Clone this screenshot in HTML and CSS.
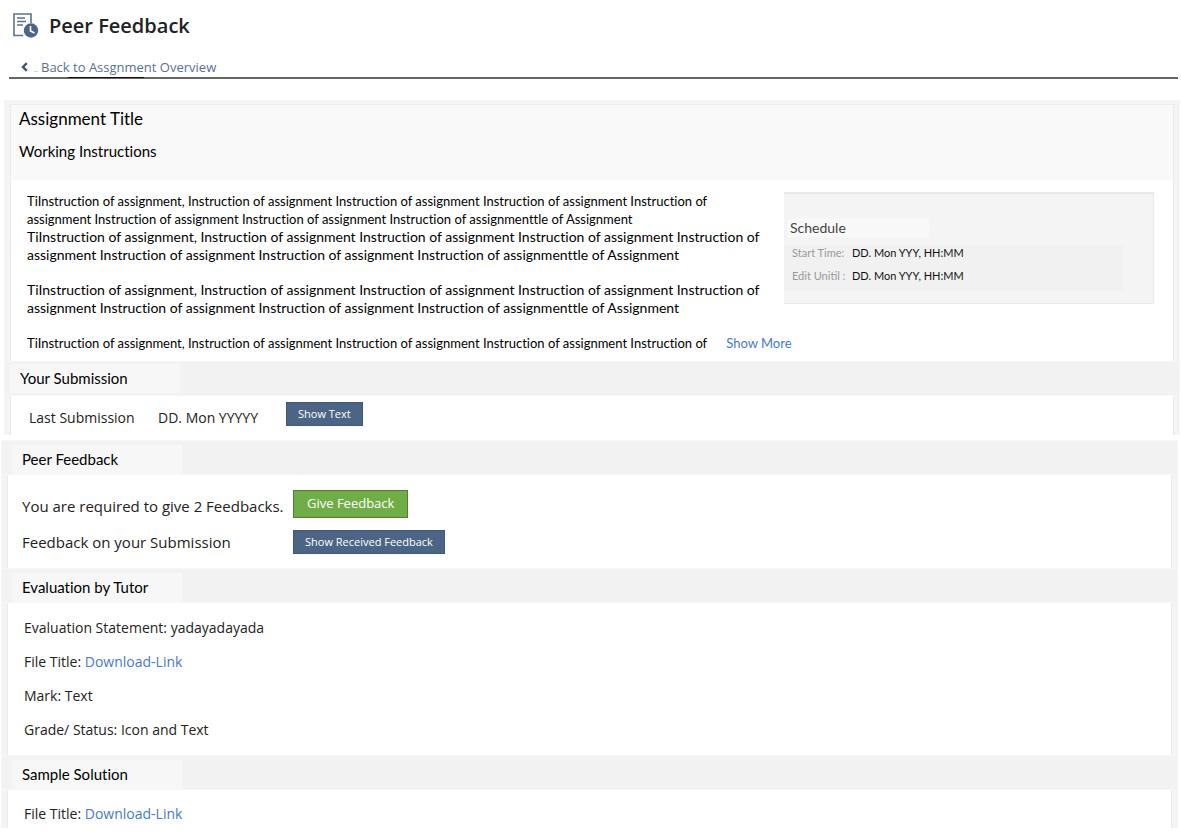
FILE: index.html
```
<!DOCTYPE html>
<html lang="en">
<head>
    <meta charset="UTF-8">
    <meta name="viewport" content="width=device-width, initial-scale=1.0">
    <title>Peer Feedback</title>
    <link rel="stylesheet" href="styles.css">
</head>
<body>
    <header class="page-header">
        <svg class="page-icon" width="28" height="28" viewBox="0 0 28 28" aria-hidden="true">
            <path d="M11 23.500H2V2h17v9" fill="none" stroke="#5b7192" stroke-width="1.600"/>
            <path d="M5 6h8M5 9.500h9M5 13h6" stroke="#5b7192" stroke-width="1.600"/>
            <circle cx="19" cy="18.500" r="7.200" fill="#4c6586"/>
            <path d="M18.500 14v5l4 2" fill="none" stroke="#fff" stroke-width="1.600"/>
        </svg>
        <h1>Peer Feedback</h1>
    </header>
    <nav class="back-bar">
        <svg width="7" height="10" viewBox="0 0 7 10" aria-hidden="true">
            <path d="M5.800 1.200L2 5l3.800 3.800" fill="none" stroke="#3f5877" stroke-width="2.400"/>
        </svg>
        <span class="back-mark">_</span>
        <a href="#">Back to Assgnment Overview</a>
    </nav>

    <main>
        <div class="panel panel-assignment">
            <div class="intro">
                <h2>Assignment Title</h2>
                <h3>Working Instructions</h3>
            </div>
            <div class="instructions">
                <div class="instruction-text">
                    <p class="small">TiInstruction of assignment, Instruction of assignment Instruction of assignment Instruction of assignment Instruction of<br>assignment Instruction of assignment Instruction of assignment Instruction of assignmenttle of Assignment</p>
                    <p>TiInstruction of assignment, Instruction of assignment Instruction of assignment Instruction of assignment Instruction of<br>assignment Instruction of assignment Instruction of assignment Instruction of assignmenttle of Assignment</p>
                    <p class="spaced">TiInstruction of assignment, Instruction of assignment Instruction of assignment Instruction of assignment Instruction of<br>assignment Instruction of assignment Instruction of assignment Instruction of assignmenttle of Assignment</p>
                    <p class="small spaced">TiInstruction of assignment, Instruction of assignment Instruction of assignment Instruction of assignment Instruction of <a class="more" href="#">Show More</a></p>
                </div>
                <aside class="schedule">
                    <h4>Schedule</h4>
                    <dl>
                        <div><dt>Start Time:</dt><dd>DD. Mon YYY, HH:MM</dd></div>
                        <div><dt>Edit Unitil :</dt><dd>DD. Mon YYY, HH:MM</dd></div>
                    </dl>
                </aside>
            </div>
            <h3 class="section-title"><span>Your Submission</span></h3>
            <div class="submission">
                <span class="submission-label">Last Submission</span>
                <span class="submission-date">DD. Mon YYYYY</span>
                <button type="button" class="btn">Show Text</button>
            </div>
        </div>

        <div class="panel panel-feedback">
            <h3 class="section-title"><span>Peer Feedback</span></h3>
            <div class="feedback">
                <span>You are required to give 2 Feedbacks.</span>
                <button type="button" class="btn btn-give">Give Feedback</button>
                <span>Feedback on your Submission</span>
                <button type="button" class="btn">Show Received Feedback</button>
            </div>
            <h3 class="section-title"><span>Evaluation by Tutor</span></h3>
            <div class="details">
                <p>Evaluation Statement: yadayadayada</p>
                <p>File Title: <a href="#">Download-Link</a></p>
                <p>Mark: Text</p>
                <p>Grade/ Status: Icon and Text</p>
            </div>
            <h3 class="section-title"><span>Sample Solution</span></h3>
            <div class="details details-last">
                <p>File Title: <a href="#">Download-Link</a></p>
            </div>
        </div>
    </main>
</body>
</html>
```
FILE: styles.css
```
* {
    box-sizing: border-box;
}
body {
    font-family: "Open Sans", sans-serif;
    font-size: 14px;
    margin: 0;
    background: #fff;
    color: #222;
}
h1, h2, h3, h4, p, dl, dd {
    margin: 0;
    font-weight: 400;
}
a {
    color: #4679c8;
    text-decoration: none;
}
.page-header {
    display: flex;
    align-items: center;
    gap: 9px;
    height: 51px;
    padding-left: 12px;
}
h1 {
    font-size: 20px;
    font-weight: 600;
}
.back-bar {
    position: relative;
    display: flex;
    align-items: center;
    height: 28px;
    margin: 0 3px 21px 9px;
    padding: 6px 0 0 12px;
    border-bottom: 2px solid #666;
    font-size: 13px;
}
.back-bar::after {
    content: "";
    position: absolute;
    left: 59px;
    bottom: -1px;
    width: 76px;
    height: 1px;
    background: #111;
}
.back-bar a {
    color: #5a6f94;
}
.back-mark {
    width: 13px;
    padding-left: 6px;
    font-size: 8px;
    color: #8a99b0;
}
.panel {
    border: solid #f4f4f4;
    border-width: 0 6px;
}
.panel-assignment {
    margin: 0 1px 5px 4px;
    border-top-width: 4px;
}
.panel-feedback {
    margin: 0 3px 0 1px;
}
.intro {
    height: 76px;
    padding: 2px 8px;
    background: #f9f9f9;
    border: 1px solid #ececec;
    border-bottom: none;
    font-family: Lato, sans-serif;
    font-variant-ligatures: none;
    color: #000;
}
.intro h2 {
    font-size: 17px;
    line-height: 24px;
    margin-bottom: 10px;
}
.intro h3 {
    font-size: 15px;
    line-height: 20px;
}
.instructions {
    display: flex;
    justify-content: space-between;
    align-items: flex-start;
    padding: 12px 19px 9px 16px;
    border: solid #ebebeb;
    border-width: 0 1px;
}
.instruction-text {
    font-family: Lato, sans-serif;
    font-variant-ligatures: none;
    font-size: 14px;
    line-height: 18px;
    color: #000;
    white-space: nowrap;
}
.instruction-text .small {
    font-size: 13px;
}
.instruction-text .spaced {
    margin-top: 17px;
}
.more {
    margin-left: 16px;
}
.schedule {
    flex: 0 0 370px;
    height: 112px;
    margin-left: -20px;
    padding: 25px 30px 15px 0;
    background: #f4f4f4;
    border: solid #e9e9e9;
    border-width: 2px 1px 1px 0;
    font-family: Lato, sans-serif;
}
.schedule h4 {
    width: 142px;
    margin: 0 0 8px 3px;
    padding-left: 3px;
    background: #f8f8f8;
    font-size: 14px;
    line-height: 18px;
    color: #444;
}
.schedule dl {
    padding: 0 8px;
    background: #f1f1f1;
    font-size: 11px;
    line-height: 16px;
}
.schedule dl div {
    display: flex;
    padding-bottom: 7px;
}
.schedule dt {
    width: 60px;
    color: #999;
}
.schedule dd {
    color: #111;
}
.section-title {
    height: 35px;
    margin: 0 -6px;
    padding: 2px 5px;
    background: #f2f2f2;
    border: 1px solid #f7f7f7;
    font-family: Lato, sans-serif;
    font-variant-ligatures: none;
    font-size: 15px;
    line-height: 29px;
    color: #000;
}
.section-title span {
    display: block;
    width: 170px;
    padding-left: 10px;
    background: #f7f7f7;
}
.panel-feedback .section-title {
    padding-top: 4px;
}
.panel-feedback .section-title span {
    margin-left: 5px;
}
.submission {
    display: flex;
    align-items: flex-start;
    height: 39px;
    padding: 6px 18px;
    border: solid #ebebeb;
    border-width: 0 1px;
}
.submission span {
    line-height: 32px;
}
.submission-label {
    width: 129px;
}
.submission-date {
    width: 128px;
}
.btn {
    height: 24px;
    padding: 0 11px 2px;
    border: 1px solid #41597b;
    border-radius: 0;
    background: #4c6586;
    color: #fff;
    font-family: "Open Sans", sans-serif;
    font-size: 11px;
    cursor: pointer;
}
.btn-give {
    align-self: start;
    height: 28px;
    padding: 0 13px 2px;
    background: #70ad47;
    border-color: #507e32;
    font-size: 13px;
}
.feedback {
    display: grid;
    grid-template-columns: 271px max-content;
    grid-template-rows: 32px 32px;
    row-gap: 4px;
    align-items: center;
    justify-items: start;
    height: 93px;
    padding: 15px 14px 0;
    border: solid #ebebeb;
    border-width: 0 1px;
    font-size: 15px;
}
.details {
    height: 152px;
    padding: 15px 16px;
    border: solid #ebebeb;
    border-width: 0 1px;
}
.details p {
    line-height: 20px;
    margin-bottom: 14px;
}
.details-last {
    height: 38px;
    padding-top: 14px;
}
```
